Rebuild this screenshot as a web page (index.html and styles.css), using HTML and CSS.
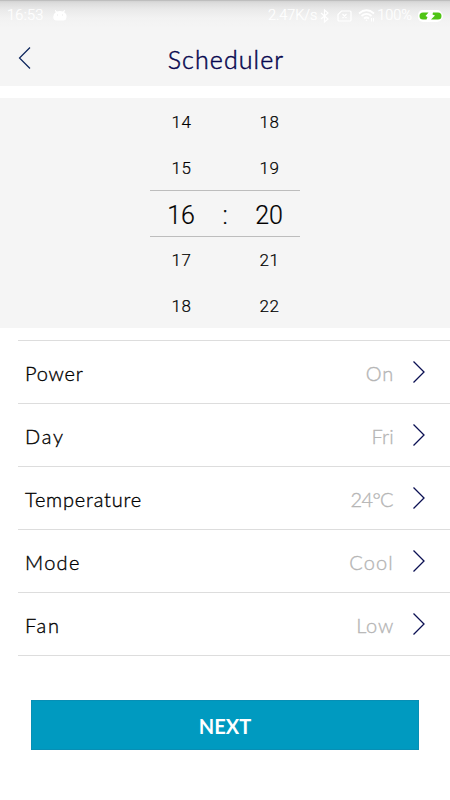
FILE: index.html
```html
<!DOCTYPE html>
<html lang="en">
<head>
<meta charset="utf-8">
<title>Scheduler</title>
<link rel="stylesheet" href="styles.css">
</head>
<body>
<header class="top">
  <div class="status">
    <span class="clock">16:53</span>
    <svg class="robot" width="14" height="12" viewBox="0 0 14 12" fill="#fff"><path d="M2.500 0l1.400 1.600Q7 .6 10 1.600L11.400 0l.7.500-1 1.800Q14 4 13.500 7q-.3 3.500-3 3.500h-7Q.4 10.500.2 7 0 4 2.800 2.300L1.800.5z"/><circle cx="4.500" cy="5" r=".7" fill="#eee"/><circle cx="9.500" cy="5" r=".7" fill="#eee"/></svg>
    <span class="speed">2.47K/s</span>
    <svg class="bt" width="9" height="14" viewBox="0 0 9 14" fill="none" stroke="#fff" stroke-width="1.200"><path d="M1 4l7 6-3.500 3V1L8 4l-7 6"/></svg>
    <svg class="sim" width="15" height="12" viewBox="0 0 15 12" fill="none" stroke="#fff" stroke-width="1.200"><path d="M4.500 1H13q1 0 1 1v8q0 1-1 1H2q-1 0-1-1V4.500zM5.500 4l4 4m0-4l-4 4"/></svg>
    <svg class="wifi" width="17" height="13" viewBox="0 0 17 13" fill="none" stroke="#fff" stroke-width="1.700"><path d="M1 4.500q7.500-6.500 15 0M3.500 7q5-4.200 10 0M6 9.500q2.500-2 5 0"/><circle cx="8.500" cy="11.300" r=".8" fill="#fff" stroke="none"/><path stroke-width="1" d="M13.500 9v3.500m2-3.500v3.500"/></svg>
    <span class="percent">100%</span>
    <svg class="battery" width="26" height="12" viewBox="0 0 26 12"><rect width="24" height="12" rx="5" fill="#fff"/><path d="M24 3.500q2 2.500 0 5z" fill="#fff"/><path d="M5 2.500h5.500L7.500 6l2 1-1 2.500H5q-3.500 0-3.500-3.500T5 2.500zM13 9.500h7q3.500 0 3.500-3.500T20 2.500h-5l-.5 2 2.500 1z" fill="#4fc414"/></svg>
  </div>
  <div class="bar">
    <svg class="back" width="14" height="24" viewBox="0 0 14 24" fill="none" stroke="#0b245b" stroke-width="1.200"><path d="M12 1.500L1.500 12 12 22.500"/></svg>
    <h1 class="title">Scheduler</h1>
  </div>
</header>
<section class="picker">
  <div class="wheel">
    <span>14</span><span></span><span>18</span>
    <span>15</span><span></span><span>19</span>
    <span class="picked">16</span><span class="picked">:</span><span class="picked">20</span>
    <span>17</span><span></span><span>21</span>
    <span>18</span><span></span><span>22</span>
  </div>
</section>
<main class="list">
  <div class="row"><span class="label power">Power</span><span class="value on">On</span><svg class="chev" width="14" height="24" viewBox="0 0 14 24"><path d="M1.500 1.500L12 12 1.500 22.500"/></svg></div>
  <div class="row"><span class="label day">Day</span><span class="value fri">Fri</span><svg class="chev" width="14" height="24" viewBox="0 0 14 24"><path d="M1.500 1.500L12 12 1.500 22.500"/></svg></div>
  <div class="row"><span class="label temperature">Temperature</span><span class="value degrees">24°C</span><svg class="chev" width="14" height="24" viewBox="0 0 14 24"><path d="M1.500 1.500L12 12 1.500 22.500"/></svg></div>
  <div class="row"><span class="label mode">Mode</span><span class="value cool">Cool</span><svg class="chev" width="14" height="24" viewBox="0 0 14 24"><path d="M1.500 1.500L12 12 1.500 22.500"/></svg></div>
  <div class="row"><span class="label fan">Fan</span><span class="value low">Low</span><svg class="chev" width="14" height="24" viewBox="0 0 14 24"><path d="M1.500 1.500L12 12 1.500 22.500"/></svg></div>
</main>
<button class="next">NEXT</button>
</body>
</html>
```
FILE: styles.css
```css
* { box-sizing: border-box; }
body { margin: 0; width: 450px; height: 800px; background: #fff; font-family: Lato, "Open Sans", sans-serif; overflow: hidden; }
.top { height: 86px; background: linear-gradient(#aaa 0, #d2d2d2 1px, #dcdcdc 3px, #e9e9e9 9px, #f2f2f2 18px, #f5f5f5 28px); }
.status { height: 30px; display: flex; align-items: center; padding: 1px 6px 0 7px; color: #fff; font: 300 14.500px/30px Roboto, sans-serif; -webkit-text-stroke: .2px; }
.status svg { -webkit-text-stroke: 0; }
.clock { width: 46px; letter-spacing: .3px; }
.speed { margin-left: auto; letter-spacing: -.1px; }
.bt { margin-left: 3px; }
.sim { margin-left: 8px; }
.wifi { margin-left: 6px; }
.percent { margin-left: 2px; }
.battery { margin-left: 6px; }
.bar { height: 56px; display: grid; grid-template-columns: 60px 1fr 60px; align-items: start; }
.back { margin: 16px 0 0 18px; }
.title { margin: 13px 0 0 2px; text-align: center; color: #06064f; font-weight: 300; -webkit-text-stroke: .5px; font-size: 25px; line-height: 32px; letter-spacing: 1.100px; }
.picker { margin-top: 12px; height: 230px; background: #f5f5f5; display: flex; justify-content: center; }
.wheel { width: 150px; display: grid; grid-template-columns: 62px 26px 62px; grid-template-rows: 46px 46px 47px 45.500px 45.500px; font: 300 17px/49px Roboto, sans-serif; -webkit-text-stroke: .2px; letter-spacing: .6px; text-align: center; color: #000; }
.wheel > span { padding-left: 1px; }
.wheel > :nth-child(n+10) { line-height: 46px; }
.wheel > .picked { padding-left: 0; }
.picked { font-size: 25px; line-height: 49px; border: solid #bdbdbd; border-width: 1px 0; letter-spacing: 0; }
.list { margin: 12px 0 0 18px; border-top: 1px solid #ddd; }
.row { height: 63px; display: flex; align-items: center; padding: 0 24px 0 7px; border-bottom: 1px solid #ddd; font-size: 20px; font-weight: 300; line-height: 24px; color: #000; -webkit-text-stroke: .35px; }
.label { margin-top: 1px; letter-spacing: .8px; }
.day { letter-spacing: 1.800px; }
.mode { letter-spacing: 1.300px; }
.fan { letter-spacing: 1.800px; }
.value { margin: 1px 18px 0 auto; color: #b5b5b5; letter-spacing: .8px; }
.fri { letter-spacing: .2px; }
.degrees { letter-spacing: -.6px; margin-right: 19px; }
.cool { letter-spacing: 1.200px; }
.chev { fill: none; stroke: #0b1053; stroke-width: 1.300; }
.next { display: block; margin: 44px 31px 0; width: 388px; height: 50px; border: 1px solid #078fb5; background: #009ac0; color: #fff; font: 700 20px/24px Lato, sans-serif; padding: 2px 0 0; }
```
